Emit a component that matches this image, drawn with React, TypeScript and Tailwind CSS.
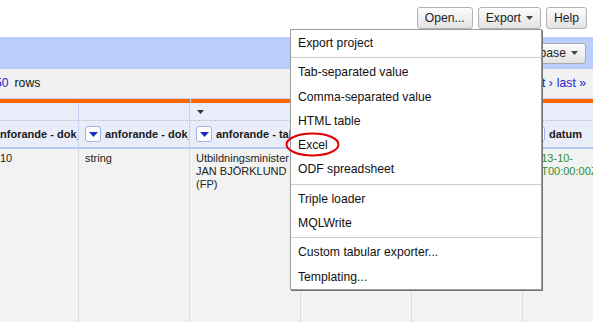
import React from "react";

const Tri = ({ color = "#444", w = 7, h = 4 }: { color?: string; w?: number; h?: number }) => (
  <svg width={w} height={h} viewBox={`0 0 ${w} ${h}`} className="block">
    <path d={`M0 0H${w}L${w / 2} ${h}Z`} fill={color} />
  </svg>
);

const Btn = ({ children }: { children: React.ReactNode }) => (
  <div className="h-[22px] px-[7px] rounded-[3px] border border-[#b3b3b3] bg-linear-to-b from-[#fcfcfc] to-[#e3e3e3] text-[12.2px] text-[#222] leading-none flex items-center gap-[5px] whitespace-nowrap">
    {children}
  </div>
);

const DropBtn = () => (
  <div className="w-[16px] h-[16px] shrink-0 bg-white border border-[#9db2e9] rounded-[3px] flex items-center justify-center">
    <Tri color="#1c2bc4" w={9} h={5} />
  </div>
);

const HeadCell = ({ label }: { label: string }) => (
  <div className="flex items-center pl-[6px] gap-[4px] overflow-hidden whitespace-nowrap border-r border-[#c6d3f5]">
    <DropBtn />
    <span className="font-bold text-[11px] text-[#1a1a1a]">{label}</span>
  </div>
);

const MenuItem = ({ children }: { children: React.ReactNode }) => (
  <div className="h-[24.3px] flex items-center pl-[7px] text-[12.2px] text-[#111] whitespace-nowrap">{children}</div>
);

const Sep = () => <div className="mt-[2px] mb-[2px] h-px bg-[#cccccc]" />;

export default function App() {
  return (
    <div className="relative w-[593px] h-[322px] overflow-hidden flex flex-col bg-[#f2f2f2] font-['Liberation_Sans',Arial,sans-serif]">
      {/* top bar */}
      <div className="h-[37px] shrink-0 bg-white flex justify-end items-start pt-[7px] pr-[6px] gap-[5px]">
        <Btn>Open...</Btn>
        <Btn>
          Export <Tri />
        </Btn>
        <Btn>Help</Btn>
      </div>

      {/* blue bar */}
      <div className="h-[32px] shrink-0 bg-[#bccdfc] flex justify-end items-center pr-[7px]">
        <div className="h-[21px] px-[7px] rounded-[3px] border border-[#a9a9a9] bg-linear-to-b from-[#fcfcfc] to-[#e3e3e3] text-[12.2px] text-[#222] leading-none flex items-center gap-[5px]">
          Freebase <Tri />
        </div>
      </div>

      {/* rows bar */}
      <div className="h-[29px] shrink-0 bg-[#f1f1f1] flex items-center justify-between text-[12.2px]">
        <div className="ml-[-5px] flex gap-[6px]">
          <span className="text-[#2222cc]">50</span>
          <span className="text-[#111]">rows</span>
        </div>
        <div className="pr-[7px] flex gap-[4px] text-[#2222cc]">
          <span>next ›</span>
          <span>last »</span>
        </div>
      </div>

      {/* table */}
      <div className="flex-1 flex flex-col ml-[-32px] w-[666px]">
        <div className="h-[5px] shrink-0 flex border-t border-[#c3d1f5]">
          <div className="w-[222px] bg-[#ff6600]" />
          <div className="flex-1 bg-[#ff6600] border-l border-[#c3d1f5]" />
        </div>
        <div className="h-[18px] shrink-0 grid grid-cols-[repeat(6,111px)] bg-[#e9edfa] border-b border-dotted border-[#a8bcef]">
          <div className="border-r border-[#c6d3f5]" />
          <div className="border-r border-[#c6d3f5]" />
          <div className="border-r border-[#c6d3f5] flex items-center pl-[7px]">
            <Tri color="#333" w={7} h={4} />
          </div>
          <div className="border-r border-[#c6d3f5]" />
          <div className="border-r border-[#c6d3f5]" />
          <div className="border-r border-[#c6d3f5]" />
        </div>
        <div className="h-[28px] shrink-0 grid grid-cols-[repeat(6,111px)] bg-[#e9edfa] border-b-2 border-[#b4c7f5]">
          <HeadCell label="anforande - dok_nummer" />
          <HeadCell label="anforande - dok_datum" />
          <HeadCell label="anforande - talare" />
          <HeadCell label="anforande - parti" />
          <HeadCell label="anforande - rubrik" />
          <HeadCell label="datum" />
        </div>
        <div className="flex-1 grid grid-cols-[repeat(6,111px)] text-[11px] leading-[13px] text-[#222]">
          <div className="border-r border-[#dcdcdc] pl-[32px] pt-[3px]">10</div>
          <div className="border-r border-[#dcdcdc] pl-[6px] pt-[3px]">string</div>
          <div className="border-r border-[#dcdcdc] pl-[6px] pt-[3px]">Utbildningsminister JAN BJÖRKLUND (FP)</div>
          <div className="border-r border-[#dcdcdc] pl-[6px] pt-[3px]" />
          <div className="border-r border-[#dcdcdc] pl-[6px] pt-[3px]" />
          <div className="border-r border-[#dcdcdc] pl-[6px] pt-[3px] text-[#2f8f2f] whitespace-nowrap">
            2013-10-
            <br />
            01T00:00:00Z
          </div>
        </div>
      </div>

      {/* export menu */}
      <div className="absolute left-[290px] top-[29px] w-[252px] bg-white border border-[#9a9a9a] shadow-[1px_1px_0_#777] pt-[1px] pb-0 z-10">
        <MenuItem>Export project</MenuItem>
        <Sep />
        <MenuItem>Tab-separated value</MenuItem>
        <MenuItem>Comma-separated value</MenuItem>
        <MenuItem>HTML table</MenuItem>
        <MenuItem>Excel</MenuItem>
        <MenuItem>ODF spreadsheet</MenuItem>
        <Sep />
        <MenuItem>Triple loader</MenuItem>
        <MenuItem>MQLWrite</MenuItem>
        <Sep />
        <MenuItem>Custom tabular exporter...</MenuItem>
        <MenuItem>Templating...</MenuItem>
      </div>

      {/* red highlight ellipse */}
      <svg className="absolute left-[285px] top-[132px] z-20" width="56" height="26" viewBox="0 0 56 26">
        <ellipse cx="27.5" cy="12.5" rx="26" ry="11" fill="none" stroke="#e00000" strokeWidth="2" />
      </svg>
    </div>
  );
}
